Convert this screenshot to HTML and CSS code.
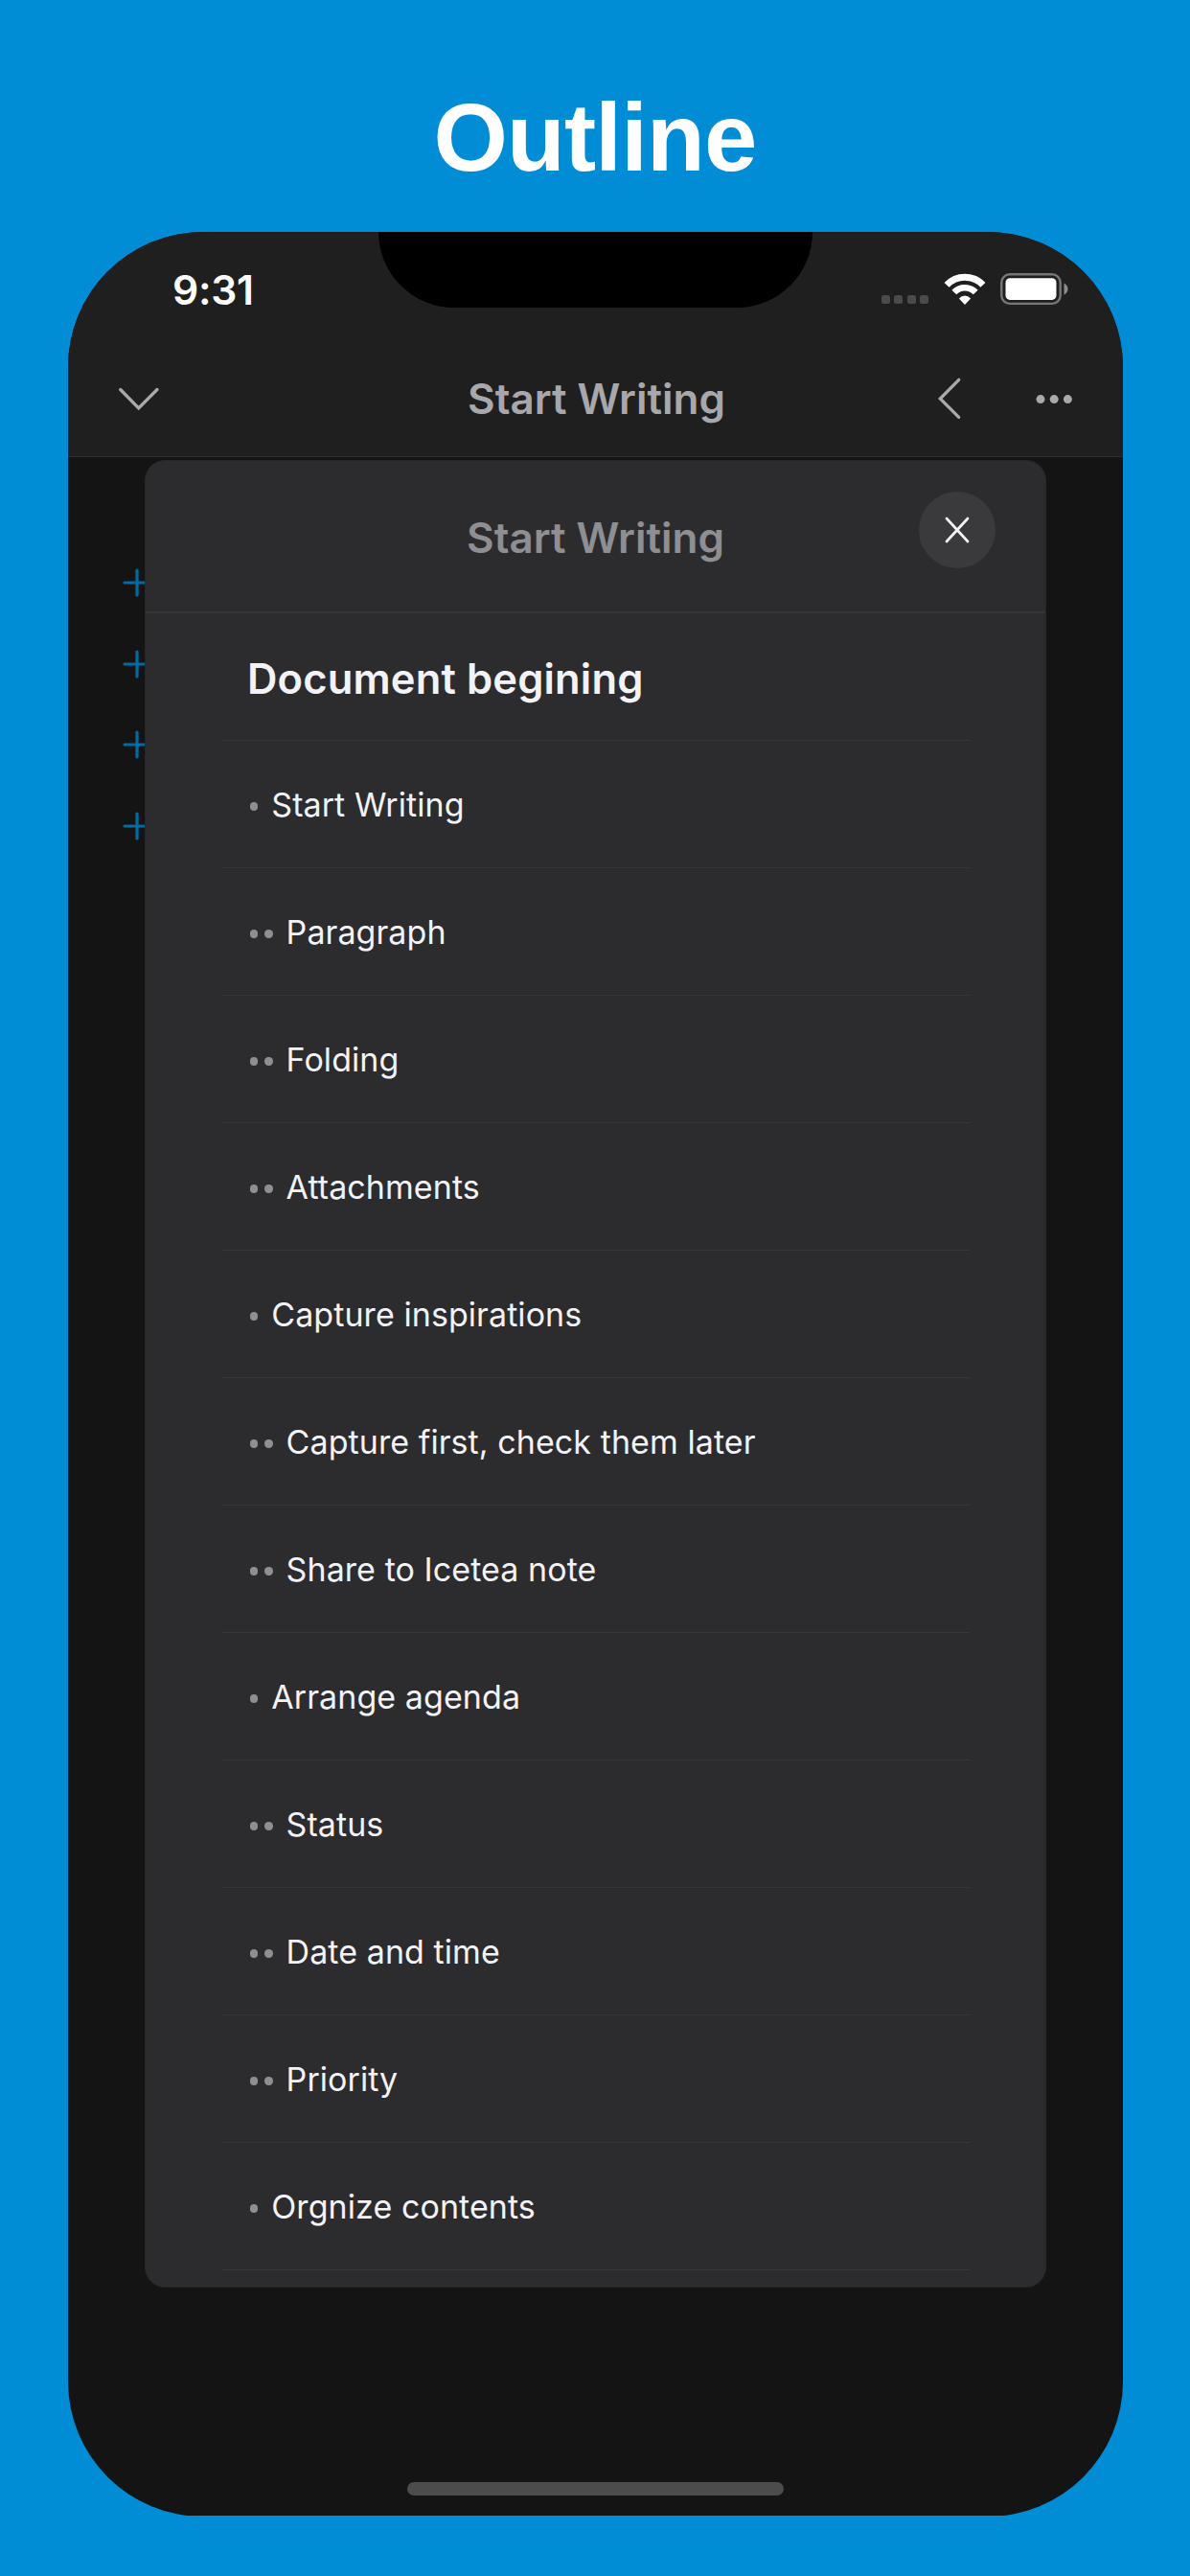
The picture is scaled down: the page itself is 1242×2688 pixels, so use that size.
FILE: index.html
```html
<!DOCTYPE html>
<html lang="en">
<head>
<meta charset="utf-8">
<title>Outline</title>
<link rel="stylesheet" href="styles.css">
</head>
<body>
<h1 class="headline">Outline</h1>
<main class="phone">
  <div class="notch"></div>
  <header class="topbar">
    <div class="status">
      <span class="time">9:31</span>
      <div class="status-icons">
        <div class="signal"><i></i><i></i><i></i><i></i></div>
        <svg class="wifi" width="44" height="34" viewBox="0 0 44 34">
          <g fill="none" stroke="#fff" stroke-width="7">
            <path d="M3.1 12.3A26 26 0 0 1 40.9 12.3"/>
            <path d="M10.8 20.1A15.4 15.4 0 0 1 33.2 20.1" stroke-width="6.6"/>
          </g>
          <path d="M22 33L15.9 26.6Q18.6 23.6 22 23.6Q25.400 23.6 28.100 26.6Z" fill="#fff"/>
        </svg>
        <svg class="battery" width="71" height="34" viewBox="0 0 71 34">
          <rect x="1.300" y="1.300" width="61.400" height="30.600" rx="8.500" fill="none" stroke="#777" stroke-width="2.400"/>
          <rect x="5.500" y="5.300" width="53" height="22.600" rx="4.500" fill="#fff"/>
          <path d="M66.500 10.500Q70.500 12.500 70.500 16.600Q70.500 20.700 66.500 22.700Z" fill="#8a8a8a"/>
        </svg>
      </div>
    </div>
    <nav class="navbar">
      <svg width="46" height="46" viewBox="0 0 46 46" class="nav-icon"><path d="M3.700 13.500L22.700 33L42 13.500"/></svg>
      <span class="title">Start Writing</span>
      <div class="nav-actions">
        <svg width="46" height="46" viewBox="0 0 46 46" class="nav-icon"><path d="M32.700 3.300L13.300 23L32.700 42.300"/></svg>
        <svg width="46" height="46" viewBox="0 0 46 46" class="nav-dots"><circle cx="9" cy="23.600" r="4.500"/><circle cx="23.200" cy="23.600" r="4.500"/><circle cx="37.400" cy="23.600" r="4.500"/></svg>
      </div>
    </nav>
  </header>
  <section class="document">
    <svg class="plus" viewBox="0 0 30 30"><path d="M15 2V28M2 15H28"/></svg>
    <svg class="plus" viewBox="0 0 30 30"><path d="M15 2V28M2 15H28"/></svg>
    <svg class="plus" viewBox="0 0 30 30"><path d="M15 2V28M2 15H28"/></svg>
    <svg class="plus" viewBox="0 0 30 30"><path d="M15 2V28M2 15H28"/></svg>
  </section>
  <section class="sheet">
    <header class="sheet-head">
      <span class="title muted">Start Writing</span>
      <div class="close">
        <svg width="26" height="28" viewBox="0 0 26 28"><path d="M2 2L24 26M24 2L2 26"/></svg>
      </div>
    </header>
    <ul class="outline">
      <li class="row first">Document begining</li>
      <li class="row"><span class="level"><i></i></span><span class="label">Start Writing</span></li>
      <li class="row"><span class="level"><i></i><i></i></span><span class="label">Paragraph</span></li>
      <li class="row"><span class="level"><i></i><i></i></span><span class="label">Folding</span></li>
      <li class="row"><span class="level"><i></i><i></i></span><span class="label">Attachments</span></li>
      <li class="row"><span class="level"><i></i></span><span class="label">Capture inspirations</span></li>
      <li class="row"><span class="level"><i></i><i></i></span><span class="label">Capture first, check them later</span></li>
      <li class="row"><span class="level"><i></i><i></i></span><span class="label">Share to Icetea note</span></li>
      <li class="row"><span class="level"><i></i></span><span class="label">Arrange agenda</span></li>
      <li class="row"><span class="level"><i></i><i></i></span><span class="label">Status</span></li>
      <li class="row"><span class="level"><i></i><i></i></span><span class="label">Date and time</span></li>
      <li class="row"><span class="level"><i></i><i></i></span><span class="label">Priority</span></li>
      <li class="row"><span class="level"><i></i></span><span class="label">Orgnize contents</span></li>
    </ul>
  </section>
  <div class="home-indicator"></div>
</main>
</body>
</html>
```
FILE: styles.css
```css
* { box-sizing: border-box; }
body {
  margin: 0;
  height: 2688px;
  background: #008dd5;
  font-family: Inter, "Liberation Sans", sans-serif;
  overflow: hidden;
}
.headline {
  margin: 0;
  height: 242px;
  padding-top: 88px;
  text-align: center;
  font: bold 99.5px/112px "Liberation Sans", Arial, sans-serif;
  letter-spacing: -0.8px;
  color: #fff;
}
.phone {
  position: relative;
  display: flex;
  flex-direction: column;
  width: 1101px;
  height: 2384px;
  margin-left: 71px;
  background: #141414;
  border-radius: 141px;
  overflow: hidden;
  clip-path: inset(0 0 1px 0);
}
.notch {
  position: absolute;
  top: 0;
  left: 324px;
  width: 453px;
  height: 79px;
  background: #000;
  border-radius: 0 0 79px 79px;
}
.topbar {
  height: 235px;
  background: #1f1f1f;
  border-bottom: 1px solid #2d2d2e;
}
.status {
  display: flex;
  justify-content: space-between;
  height: 120px;
  padding: 0 57px 0 109px;
}
.time {
  padding-top: 35px;
  font-size: 42.5px;
  line-height: 52px;
  font-weight: 600;
  letter-spacing: -0.3px;
  color: #fff;
}
.status-icons {
  display: flex;
  align-items: flex-start;
  padding-top: 43px;
}
.signal {
  display: flex;
  gap: 4.400px;
  padding-top: 23px;
  margin-right: 16px;
}
.signal i {
  width: 9px;
  height: 9px;
  border-radius: 2.500px;
  background: #4b4b4b;
}
.wifi { margin-right: 15px; }
.navbar {
  display: grid;
  grid-template-columns: 1fr auto 1fr;
  align-items: center;
  height: 108px;
  padding: 0 49px 0 51px;
}
.nav-icon, .plus { fill: none; stroke-linecap: round; }
.nav-icon { stroke: #a9a9ad; stroke-width: 3.300; }
.nav-dots { fill: #a9a9ad; }
.nav-actions {
  display: flex;
  justify-content: flex-end;
  gap: 63px;
}
.title {
  font-size: 44px;
  line-height: 54px;
  font-weight: 600;
  color: #a8a8ac;
}
.muted { color: #8e8e93; }
.document {
  display: flex;
  flex-direction: column;
  gap: 54.500px;
  padding: 116px 0 0 57px;
}
.plus {
  width: 30px;
  height: 30px;
  stroke: #006ba3;
  stroke-width: 3.200;
}
.sheet {
  position: absolute;
  left: 80px;
  top: 238px;
  width: 941px;
  height: 1907px;
  background: #2c2c2e;
  border: 1px solid #272728;
  border-radius: 21px;
  overflow: hidden;
}
.sheet-head {
  position: relative;
  display: flex;
  justify-content: center;
  height: 159px;
  padding-top: 53px;
  border-bottom: 2px solid #363638;
}
.close {
  position: absolute;
  right: 52px;
  top: 32px;
  display: grid;
  place-items: center;
  width: 80px;
  height: 80px;
  border-radius: 50%;
  background: #3a3a3c;
}
.close path {
  stroke: #f2f2f7;
  stroke-width: 2.700;
  stroke-linecap: round;
}
.outline {
  margin: 0;
  padding: 0 79px;
  list-style: none;
}
.row {
  display: flex;
  align-items: center;
  gap: 14px;
  height: 133px;
  padding-left: 30px;
  border-bottom: 1px solid #38383a;
  font-size: 34px;
  color: #f2f2f7;
  letter-spacing: 0.070px;
}
.first {
  padding-top: 3px;
  font-size: 43.500px;
  font-weight: 600;
  letter-spacing: 0.150px;
  padding-left: 27px;
}
.level {
  display: flex;
  gap: 7px;
  padding-top: 5px;
}
.level i {
  width: 8.300px;
  height: 8.300px;
  border-radius: 50%;
  background: #8e8e93;
}
.home-indicator {
  position: absolute;
  left: 354px;
  bottom: 22px;
  width: 393px;
  height: 14px;
  border-radius: 7px;
  background: #4c4c4c;
}
```
